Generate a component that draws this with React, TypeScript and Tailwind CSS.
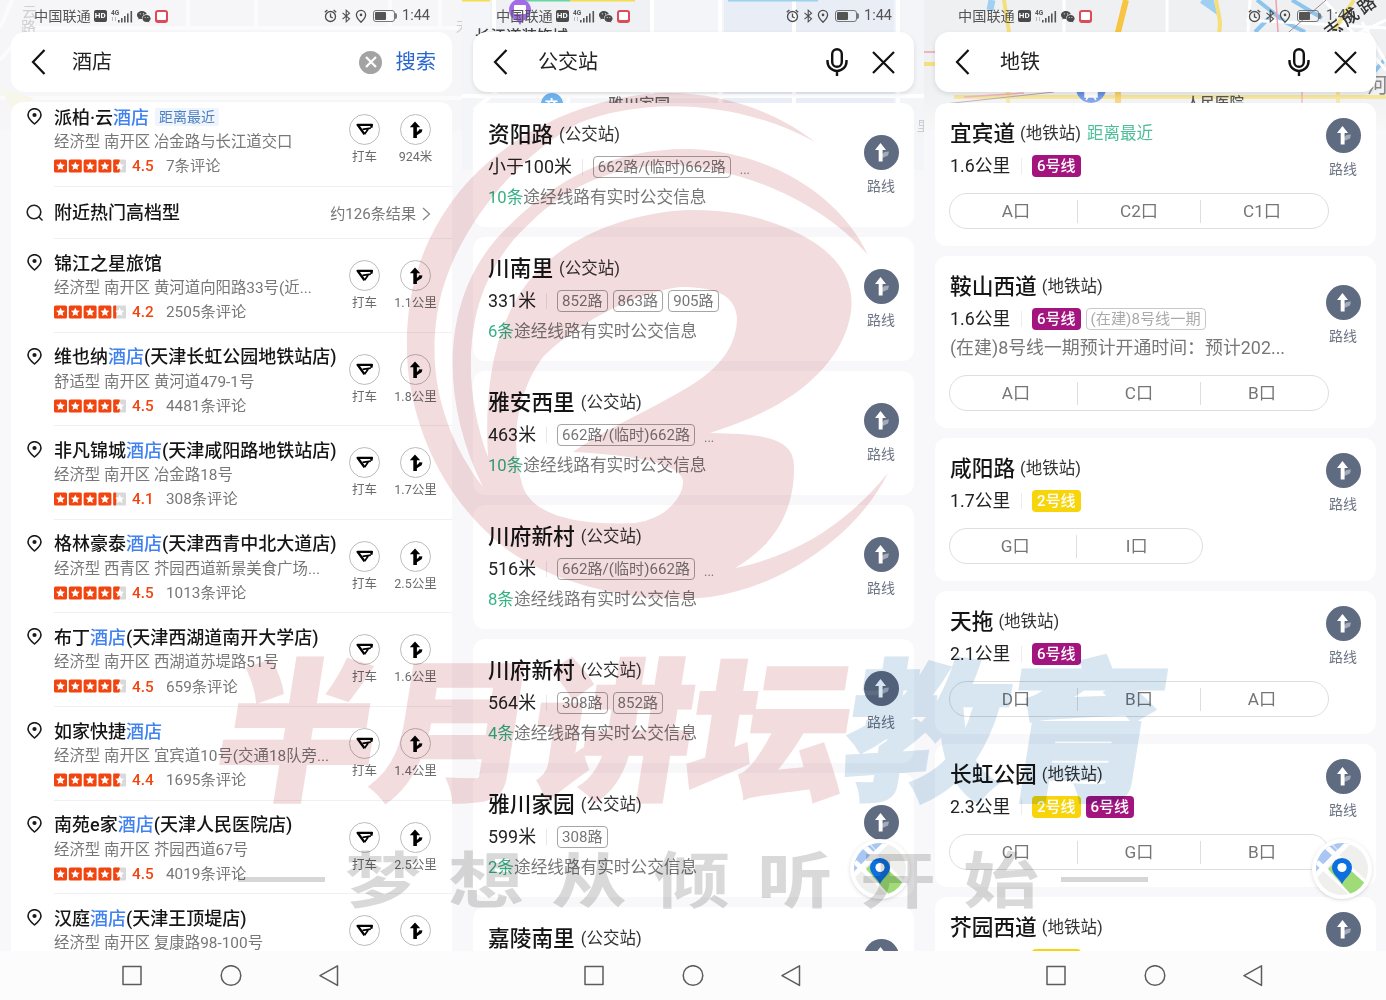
import React from "react";

type Hotel = {
  name: [string, string, string];
  address: string;
  score: number;
  reviews: string;
  distance: string;
  nearest?: boolean;
};

const hotels: Hotel[] = [
  { name: ["派柏·云", "酒店", ""], address: "经济型 南开区 冶金路与长江道交口", score: 4.5, reviews: "7条评论", distance: "924米", nearest: true },
  { name: ["锦江之星旅馆", "", ""], address: "经济型 南开区 黄河道向阳路33号(近...", score: 4.2, reviews: "2505条评论", distance: "1.1公里" },
  { name: ["维也纳", "酒店", "(天津长虹公园地铁站店)"], address: "舒适型 南开区 黄河道479-1号", score: 4.5, reviews: "4481条评论", distance: "1.8公里" },
  { name: ["非凡锦城", "酒店", "(天津咸阳路地铁站店)"], address: "经济型 南开区 冶金路18号", score: 4.1, reviews: "308条评论", distance: "1.7公里" },
  { name: ["格林豪泰", "酒店", "(天津西青中北大道店)"], address: "经济型 西青区 芥园西道新景美食广场...", score: 4.5, reviews: "1013条评论", distance: "2.5公里" },
  { name: ["布丁", "酒店", "(天津西湖道南开大学店)"], address: "经济型 南开区 西湖道苏堤路51号", score: 4.5, reviews: "659条评论", distance: "1.6公里" },
  { name: ["如家快捷", "酒店", ""], address: "经济型 南开区 宜宾道10号(交通18队旁...", score: 4.4, reviews: "1695条评论", distance: "1.4公里" },
  { name: ["南苑e家", "酒店", "(天津人民医院店)"], address: "经济型 南开区 芥园西道67号", score: 4.5, reviews: "4019条评论", distance: "2.5公里" },
  { name: ["汉庭", "酒店", "(天津王顶堤店)"], address: "经济型 南开区 复康路98-100号", score: 4.5, reviews: "", distance: "" },
];

const busStops = [
  { name: "资阳路", distance: "小于100米", lines: ["662路/(临时)662路"], more: true, count: "10条" },
  { name: "川南里", distance: "331米", lines: ["852路", "863路", "905路"], more: false, count: "6条" },
  { name: "雅安西里", distance: "463米", lines: ["662路/(临时)662路"], more: true, count: "10条" },
  { name: "川府新村", distance: "516米", lines: ["662路/(临时)662路"], more: true, count: "8条" },
  { name: "川府新村", distance: "564米", lines: ["308路", "852路"], more: false, count: "4条" },
  { name: "雅川家园", distance: "599米", lines: ["308路"], more: false, count: "2条" },
  { name: "嘉陵南里", distance: "", lines: [], more: false, count: "" },
];

const metroStops = [
  { name: "宜宾道", distance: "1.6公里", lines: ["6号线"], exits: ["A口", "C2口", "C1口"], nearest: true },
  {
    name: "鞍山西道",
    distance: "1.6公里",
    lines: ["6号线"],
    planned: "(在建)8号线一期",
    note: "(在建)8号线一期预计开通时间：预计202...",
    exits: ["A口", "C口", "B口"],
  },
  { name: "咸阳路", distance: "1.7公里", lines: ["2号线"], exits: ["G口", "I口"] },
  { name: "天拖", distance: "2.1公里", lines: ["6号线"], exits: ["D口", "B口", "A口"] },
  { name: "长虹公园", distance: "2.3公里", lines: ["2号线", "6号线"], exits: ["C口", "G口", "B口"] },
  { name: "芥园西道", distance: "", lines: ["2号线"], exits: [] },
];

const StatusBar = () => (
  <div className="relative flex h-8 shrink-0 items-center pl-[34px] pr-[33px] text-[#555]">
    <span className="text-[14.2px] leading-8">中国联通</span>
    <span className="ml-[3px] flex h-[12px] w-[13px] items-center justify-center rounded-[2px] bg-[#4a4a4a] text-[8px] font-bold leading-none text-white">
      HD
    </span>
    <svg className="ml-[4px] h-[16px] w-[22px]" viewBox="0 0 22 16" fill="#555">
      <text x="0" y="7" fontSize="6.5" fontWeight="700">4G</text>
      <path d="M1.5 9v4M4.500 9v4" stroke="#bbb" strokeWidth="1" />
      <path d="M7 12h1.600v2.500H7zM10 10h1.600v4.500H10zM13 8h1.600v6.500H13zM16 5.500h1.600v9H16zM19.500 3h1.600v11.500h-1.600z" />
    </svg>
    <svg className="ml-[4px] h-[13px] w-[14px]" viewBox="0 0 14 13" fill="#4a4a4a">
      <path d="M5 1C2.200 1 0 2.800 0 5c0 1.300.7 2.300 1.700 3L1.200 9.600 3 8.700c.6.200 1.300.3 2 .3C4.700 6.200 7 4.200 9.900 4.200 9.400 2.300 7.400 1 5 1z" />
      <path d="M9.500 5C7.100 5 5.400 6.600 5.400 8.500S7.100 12 9.500 12c.5 0 1-.1 1.500-.2l1.400.8-.4-1.400c1-.7 1.600-1.600 1.600-2.700C13.600 6.600 11.800 5 9.500 5z" />
      <g fill="#fff">
        <circle cx="3.300" cy="3.800" r=".6" />
        <circle cx="6.500" cy="3.800" r=".6" />
        <circle cx="8.200" cy="7.600" r=".5" />
        <circle cx="10.900" cy="7.600" r=".5" />
      </g>
    </svg>
    <span className="ml-[4px] flex h-[13px] w-[13px] items-center justify-center rounded-[3px] bg-[#dc4b59]">
      <span className="h-[8px] w-[9px] rounded-[1px] bg-white" />
    </span>
    <svg className="ml-auto h-[16px] w-[46px]" viewBox="0 0 46 16" fill="none" stroke="#4d4d4d" strokeWidth="1.300">
      <circle cx="6.500" cy="8.500" r="5" />
      <path d="M6.500 5.500v3.300l2.200 1M.8 4.300L3.400 2M12.200 4.300L9.600 2" />
      <path d="M18.500 4.800l7 6-3.300 3V2.200l3.300 3-7 6" strokeWidth="1.100" />
      <path d="M37 14.200c-3-3-4.600-4.900-4.600-7.300a4.600 4.600 0 019.200 0c0 2.400-1.600 4.300-4.600 7.300z" />
      <circle cx="37" cy="6.900" r="1.300" fill="#4d4d4d" stroke="none" />
    </svg>
    <span className="ml-[3px] flex h-[12px] w-[22px] items-center rounded-[3px] border border-[#777] p-[1px]">
      <span className="h-full w-[11px] rounded-[1px] bg-[#555]" />
    </span>
    <span className="h-[6px] w-[2px] rounded-r bg-[#777]" />
    <span className="ml-[5px] w-[27px] whitespace-nowrap text-[14.5px] leading-8">1:44</span>
  </div>
);

const BackIcon = () => (
  <svg className="h-[26px] w-[15px]" viewBox="0 0 15 26" fill="none" stroke="#111" strokeWidth="2.200">
    <path d="M13.500 1L2 13l11.500 12" />
  </svg>
);

const SearchHeader = ({ title, editing }: { title: string; editing?: boolean }) => (
  <div
    className={`relative ml-[11px] mr-[10px] flex h-[60px] shrink-0 items-center rounded-[14px] bg-white pl-[20px] ${
      editing ? "pr-4" : "pr-[19px] shadow-[0_2px_5px_rgba(0,0,0,0.10)]"
    }`}
  >
    <BackIcon />
    <span className={`text-[20px] text-[#222] ${editing ? "ml-[26px]" : "ml-[30px]"}`}>{title}</span>
    {editing ? (
      <>
        <span className="ml-auto flex h-[23px] w-[23px] items-center justify-center rounded-full bg-[#a3a3a3]">
          <svg className="h-3 w-3" viewBox="0 0 12 12" stroke="#fff" strokeWidth="2.200">
            <path d="M1 1l10 10M11 1L1 11" />
          </svg>
        </span>
        <span className="ml-[13px] text-[20.3px] text-[#2a66d0]">搜索</span>
      </>
    ) : (
      <>
        <svg className="ml-auto h-[28px] w-[22px]" viewBox="0 0 22 28" fill="none" stroke="#111" strokeWidth="2.400">
          <rect x="6.200" y="1.200" width="9.600" height="17.500" rx="4.800" />
          <path d="M1.500 12v1.500a9.500 9.500 0 0019 0V12M11 23v5" />
        </svg>
        <svg className="ml-[24px] h-[23px] w-[23px]" viewBox="0 0 23 23" stroke="#111" strokeWidth="2.200">
          <path d="M1 1l21 21M22 1L1 22" />
        </svg>
      </>
    )}
  </div>
);

const NavBar = () => (
  <div className="relative h-[49px] shrink-0 bg-[#fcfcfc] pl-[122px] pt-[14px]">
    <svg className="h-[22px] w-[218px]" viewBox="0 0 218 22" fill="none" stroke="#5c5c5c" strokeWidth="1.500" strokeLinejoin="round">
      <rect x="1" y="1.500" width="18" height="18" />
      <circle cx="109" cy="10.500" r="9.800" />
      <path d="M215.500.8v19.600L198 10.600z" />
    </svg>
  </div>
);

const PinIcon = () => (
  <svg className="h-[17px] w-[15px]" viewBox="0 0 15 17" fill="none" stroke="#1a1a1a" strokeWidth="1.600">
    <path d="M7.500 16C3.300 12.500 1 9.800 1 7a6.500 6.300 0 0113 0c0 2.800-2.300 5.500-6.500 9z" strokeLinejoin="round" />
    <circle cx="7.500" cy="7" r="2.100" fill="#1a1a1a" stroke="none" />
  </svg>
);

const TaxiIcon = () => (
  <svg className="h-[13px] w-[17px]" viewBox="0 0 17 13" fill="none" stroke="#000" strokeLinejoin="round">
    <path d="M15.200 4.800L15.900 1.800H1.600L8.500 11.200" strokeWidth="2.300" />
    <path d="M8.500 11.200L12.600 5.600M14.800 5.200L6.500 6.300" strokeWidth="1.700" />
  </svg>
);

const RouteIcon = () => (
  <svg className="h-[17px] w-[14px]" viewBox="0 0 14 17" fill="#000">
    <path d="M6 .5l5.200 5.800H7.900v4.600l2-1.700.3-1 3.300.3-.9 2.700-4.700 3V17H4.300V6.300H.8z" />
  </svg>
);

const Rating = ({ score }: { score: number }) => (
  <svg className="h-[14px] w-[72px] shrink-0" viewBox="0 0 72 14">
    {[0, 1, 2, 3, 4].map((i) => (
      <g key={i} transform={`translate(${i * 14.8} 0)`}>
        <rect y=".5" width="13" height="13" rx="1.500" fill={i < 4 ? "#f2440f" : "#d9d9d9"} />
        {i === 4 && <rect y=".5" width={score < 4.3 ? 3 : 6.500} height="13" rx="1" fill="#f2440f" />}
        <path
          d="M6.500 2.600l1.300 2.900 3.100.3-2.300 2.100.7 3.100-2.800-1.600L3.700 11l.7-3.100-2.300-2.100 3.100-.3z"
          fill="#fff"
        />
      </g>
    ))}
  </svg>
);

const RoundAction = ({ label, children }: { label: string; children: React.ReactNode }) => (
  <div className="flex w-[51px] flex-col items-center pt-[21px]">
    <span className="flex h-[31px] w-[31px] items-center justify-center rounded-full border border-[#bcbcbc]">{children}</span>
    <span className="mt-[4px] whitespace-nowrap text-[12.5px] leading-4 text-[#6b6b6b]">{label}</span>
  </div>
);

const HotelRow = ({ hotel }: { hotel: Hotel }) => (
  <div className="flex h-[93.6px]">
    <div className="w-[43px] shrink-0 pl-[16px] pt-[15px]">
      <PinIcon />
    </div>
    <div className="flex min-w-0 flex-1 border-b border-[#f0f0f0]">
      <div className="w-[285px] shrink-0 whitespace-nowrap pt-[11px]">
        <div className="flex h-[26px] items-center text-[18px] font-medium text-[#151515]">
          <span>
            {hotel.name[0]}
            <span className="text-[#3f82f0]">{hotel.name[1]}</span>
            {hotel.name[2]}
          </span>
          {hotel.nearest && (
            <span className="ml-[6px] rounded-[2px] bg-[#f0f5fd] px-1 text-[14px] font-normal leading-[18px] text-[#4a7fc0]">
              距离最近
            </span>
          )}
        </div>
        <div className="h-[23px] text-[15.4px] leading-[24px] text-[#777]">{hotel.address}</div>
        {hotel.reviews && (
          <div className="flex h-[26px] items-center text-[15.3px] text-[#777]">
            <Rating score={hotel.score} />
            <span className="ml-[6px] mt-px w-[34px] font-medium text-[#f2440f]">{hotel.score}</span>
            <span className="mt-px">{hotel.reviews}</span>
          </div>
        )}
      </div>
      <RoundAction label={hotel.distance && "打车"}>
        <TaxiIcon />
      </RoundAction>
      <RoundAction label={hotel.distance}>
        <RouteIcon />
      </RoundAction>
    </div>
  </div>
);

const RouteButton = () => (
  <div className="flex w-[36px] flex-col items-center">
    <span className="flex h-[35px] w-[35px] items-center justify-center rounded-full bg-[#5f6b80]">
      <svg className="h-[19px] w-[18px]" viewBox="0 0 18 19">
        <path d="M9.500 11.500l3-2.500 4.500-.6-1 4-5.500 2.600z" fill="#a3abb8" />
        <path d="M8.500 0l5.500 7h-3.400v11.500H6.700V7H3z" fill="#fff" />
      </svg>
    </span>
    <span className="mt-[6px] text-[14px] leading-5 text-[#6d7585]">路线</span>
  </div>
);

const BusCard = ({ stop }: { stop: (typeof busStops)[number] }) => (
  <div className="flex h-[124px] shrink-0 justify-between rounded-xl bg-white pl-[15px] pr-[15px]">
    <div className="whitespace-nowrap pt-[17px]">
      <div className="flex h-[30px] items-center">
        <span className="text-[21.700px] font-medium text-[#151515]">{stop.name}</span>
        <span className="ml-[6px] text-[16.5px] text-[#333]">(公交站)</span>
      </div>
      {stop.distance && (
        <>
          <div className="mt-[5px] flex h-[24px] items-center">
            <span className="text-[17.9px] text-[#222]">{stop.distance}</span>
            <span className="ml-[10px] mr-[10px] h-4 w-px bg-[#e8e8ec]" />
            <span className="flex gap-[5px]">
              {stop.lines.map((line) => (
                <span key={line} className="h-[22px] rounded-[4px] border border-[#a5a5a5] px-[4px] text-[15.1px] leading-5 text-[#777]">
                  {line}
                </span>
              ))}
            </span>
            {stop.more && <span className="ml-[9px] mt-[6px] text-[13px] text-[#888]">...</span>}
          </div>
          <div className="mt-[7px] text-[16.650px] leading-6 text-[#777]">
            <span className="text-[#35b184]">{stop.count}</span>途经线路有实时公交信息
          </div>
        </>
      )}
    </div>
    <div className="pt-[32px]">
      <RouteButton />
    </div>
  </div>
);

const MetroCard = ({ stop }: { stop: (typeof metroStops)[number] }) => (
  <div
    className={`flex shrink-0 justify-between rounded-xl bg-white pl-[14px] pr-[15px] ${stop.note ? "h-[171.7px]" : "h-[143.2px]"}`}
  >
    <div className="whitespace-nowrap pt-[16px]">
      <div className="flex h-[30px] items-center pl-px">
        <span className="text-[21.700px] font-medium text-[#151515]">{stop.name}</span>
        <span className="ml-[5px] text-[16.5px] text-[#333]">(地铁站)</span>
        {stop.nearest && <span className="ml-[6px] text-[16.5px] text-[#4cbf98]">距离最近</span>}
      </div>
      <div className="mt-[5px] flex h-[24px] items-center pl-px">
        <span className="w-[71px] text-[17.8px] text-[#222]">{stop.distance}</span>
        <span className="mr-[10px] h-4 w-px bg-[#ececf0]" />
        <span className="flex gap-[5px]">
          {stop.lines.map((line) => (
            <span
              key={line}
              className={`h-[22px] rounded-[4px] px-[5px] text-[15px] font-medium leading-[22px] text-white ${
                line === "2号线" ? "bg-[#f8d40b]" : "bg-[#a3147f]"
              }`}
            >
              {line}
            </span>
          ))}
          {stop.planned && (
            <span className="h-[22px] rounded-[4px] border border-[#c9c9c9] px-[4px] text-[15.2px] leading-5 text-[#aaa]">
              {stop.planned}
            </span>
          )}
        </span>
      </div>
      {stop.note && <div className="mt-[5px] h-6 pl-px text-[17.9px] leading-6 text-[#777]">{stop.note}</div>}
      {stop.exits.length > 0 && (
        <div
          className={`flex h-[36px] items-center rounded-full border border-[#dedede] px-[5px] pt-px ${
            stop.note ? "mt-[15px]" : "mt-[15px]"
          } ${stop.exits.length === 3 ? "w-[380px]" : "w-[254px]"}`}
        >
          {stop.exits.map((exit, i) => (
            <span
              key={exit}
              className={`flex-1 text-center text-[17.2px] leading-[23px] text-[#757575] ${i > 0 ? "border-l border-[#dedede]" : ""}`}
            >
              {exit}
            </span>
          ))}
        </div>
      )}
    </div>
    <div className={`-ml-10 ${stop.note ? "pt-[29px]" : "pt-[15px]"}`}>
      <RouteButton />
    </div>
  </div>
);

const MapButton = () => (
  <svg className="absolute bottom-[100px] right-[13px] h-[62px] w-[62px] drop-shadow" viewBox="0 0 62 62">
    <defs>
      <clipPath id="disc">
        <circle cx="31" cy="31" r="26" />
      </clipPath>
    </defs>
    <circle cx="31" cy="31" r="30" fill="#fff" />
    <g clipPath="url(#disc)">
      <rect width="62" height="62" fill="#efefee" />
      <path d="M0 40L26 12 14 0H0z" fill="#a9c6f5" />
      <path d="M18 2h24L30 15z" fill="#a9c6f5" />
      <path d="M8 2l54 50M-2 44L42 0" stroke="#fff" strokeWidth="5" />
      <path d="M6 24l42 38" stroke="#fff" strokeWidth="5" />
      <path d="M17 31l10-10 30 27-14 12z" fill="#9fdc77" />
    </g>
    <path d="M31 46c-3-6-10-10-10-16.500a10 9.500 0 0120 0C41 36 34 40 31 46z" fill="#0d6fe0" />
    <circle cx="31" cy="29.500" r="4.600" fill="#fff" />
  </svg>
);

// Map strip that shows through behind the status bar and the search box
const HotelMap = () => (
  <svg className="absolute left-0 top-0 h-[130px] w-full" viewBox="0 0 462 130">
    <rect width="462" height="130" fill="#f6f6f8" />
    <path d="M0 28l12-28M0 60l28-32h430M188 0v28M256 0v28M390 0v28M440 0v28M0 98h462" stroke="#fbfbfb" strokeWidth="4" fill="none" />
    <path d="M0 88l34 10-20 14z" fill="#f6f6ea" />
    <text x="22" y="17" fontSize="15" fill="#d0d0d0">云</text>
    <text x="21" y="32" fontSize="15" fill="#d0d0d0">路</text>
    <text x="456" y="31" fontSize="13" fill="#ccc">天</text>
  </svg>
);

const BusMap = () => (
  <svg className="absolute left-0 top-0 h-[170px] w-full" viewBox="0 0 462 170">
    <rect width="462" height="170" fill="#f4f5f9" />
    <rect x="28" width="160" height="32" fill="#eff1f5" />
    <rect x="262" width="170" height="110" fill="#e9edf5" />
    <path d="M32 0v30M190 0v110M258 0v110M332 0v110M436 0v110M0 96h462M12 110l24-20M106 96v14" stroke="#fff" strokeWidth="4" fill="none" />
    <path d="M60 0h48v1.500H60z" fill="#67d7a4" />
    <path d="M0 0h28v1.500H0zM108 0h65v1.500h-65z" fill="#f5dd4c" />
    <path d="M266 0h90v1.500h-90z" fill="#9bd3ee" />
    <path d="M58 25l-5-8h10z" fill="#a36be8" />
    <circle cx="58" cy="10" r="11" fill="#a36be8" />
    <rect x="52" y="5" width="12" height="9" rx="1" fill="#fff" />
    <circle cx="90" cy="104" r="11" fill="#6eb3ee" />
    <text x="83" y="109" fontSize="13" fontWeight="700" fill="#fff">文</text>
    <text x="13" y="42" fontSize="15.500" fontWeight="500" fill="#444">长江道装饰城</text>
    <text x="146" y="110" fontSize="15.500" fontWeight="500" fill="#666">雅川家园</text>
    <text x="455" y="130" fontSize="13" fill="#ccc">里</text>
  </svg>
);

const MetroMap = () => (
  <svg className="absolute left-0 top-0 h-[130px] w-full" viewBox="0 0 462 130">
    <defs>
      <linearGradient id="fade" x1="0" y1="0" x2="0" y2="1">
        <stop offset="0.650" stopColor="#f7f7f8" stopOpacity="0" />
        <stop offset="1" stopColor="#f7f7f8" />
      </linearGradient>
    </defs>
    <rect width="462" height="130" fill="#eff0f2" />
    <g fill="none">
      <path d="M68 0l-2 10M278 0l10 7-2-7" stroke="#9fd0f2" strokeWidth="7" />
      <path d="M333 0l28 22 20 10M345 18l-14 14M368 0l30 18M440 84l22-26" stroke="#8ec5ef" strokeWidth="4" />
      <path d="M243 0v32M140 0v32M324 32l2-32M322 20l140 8M400 0l62 70M420 40l42-20M438 22l24 40" stroke="#fff" strokeWidth="3" />
      <path d="M0 64h30M80 0l5 32M292 0c2 14 6 22 3 32M30 97h432M84 90v18M410 30l20-30M414 92v18" stroke="#f4df7c" strokeWidth="4" />
      <path d="M202 0l-8 32v78" stroke="#f7c542" strokeWidth="6" />
      <path d="M352 0l2 32M0 52h30M378 90v20M40 97l60-4" stroke="#ef9fae" strokeWidth="1.500" />
      <path d="M402 0l-44 38M20 104l110-12" stroke="#a08a98" strokeWidth="1" />
    </g>
    <circle cx="167" cy="88" r="15" fill="#4479de" />
    <path d="M161 90h12v7h-12zM162 100l2-3M172 100l-2-3" fill="#fff" stroke="#fff" strokeWidth="1.500" />
    <rect width="462" height="130" fill="url(#fade)" />
    <text x="262" y="108" fontSize="14.500" fontWeight="500" fill="#555">人民医院</text>
    <text x="443" y="92" fontSize="21" fill="#888">河</text>
  </svg>
);

const Swoosh = () => (
  <path
    fill="#f3dcde"
    fillRule="evenodd"
    d="M815 142C762 100 682 82 612 100C550 114 490 150 453 200C420 245 402 300 408 370C416 440 450 505 505 548C555 585 640 605 710 597C790 585 860 530 888 473C850 520 800 555 735 568C775 545 795 510 794 465C793 436 758 434 710 433C755 418 806 398 837 350C860 310 858 272 815 243C775 217 720 205 665 212C610 220 560 242 528 282C495 325 484 385 488 457C472 415 466 365 475 320C482 285 500 250 530 223C570 183 620 165 669 165C740 167 820 200 868 255C840 195 770 152 690 149C610 148 550 182 500 235C440 300 440 400 483 487C447 440 427 380 437 315C448 240 510 160 579 123C640 98 735 98 815 142ZM573 452C600 432 650 410 690 386C720 368 737 345 737 318C735 292 710 287 680 287C630 294 575 325 543 357C515 395 510 445 523 487C535 520 590 525 635 523C665 519 684 498 683 480C678 462 630 455 573 452Z"
  />
);

const Watermark = () => (
  <svg className="pointer-events-none absolute inset-0 h-[1000px] w-[1386px] mix-blend-multiply" viewBox="0 0 1386 1000">
    <Swoosh />
    <g
      transform="translate(0 788) skewX(-9) scale(1 0.950)"
      fontSize="160"
      fontWeight="900"
      fontFamily="'Noto Sans CJK SC', sans-serif"
      strokeWidth="3"
    >
      {["半", "月", "讲", "坛", "教", "育"].map((char, i) => (
        <text
          key={char}
          x={210 + i * 157.200}
          y="0"
          fill={i < 4 ? "#f3dcde" : "#d7e6f1"}
          stroke={i < 4 ? "#f3dcde" : "#d7e6f1"}
        >
          {char}
        </text>
      ))}
    </g>
    <g transform="translate(0 903) scale(1 0.800)" fontSize="76" fontWeight="700" fill="#d9d9d9" fontFamily="'Noto Sans CJK SC', sans-serif">
      {["梦", "想", "从", "倾", "听", "开", "始"].map((char, i) => (
        <text key={char} x={345 + i * 103} y="0">
          {char}
        </text>
      ))}
    </g>
    <path d="M238 877h87v5h-87zM1061 877h87v5h-87z" fill="#d6d6d6" />
  </svg>
);

const Phone = ({ map, children }: { map: React.ReactNode; children: React.ReactNode }) => (
  <div className="relative flex h-[1000px] w-[462px] flex-col overflow-hidden bg-[#f8f8fa]">
    {map}
    <StatusBar />
    {children}
    <NavBar />
  </div>
);

export default function App() {
  return (
    <div className="relative flex h-[1000px] w-[1386px] overflow-hidden bg-white font-[Roboto,'Noto_Sans_CJK_SC',sans-serif]">
      <Phone map={<HotelMap />}>
        <SearchHeader title="酒店" editing />
        <div className="relative ml-[11px] mr-[10px] mt-[10px] min-h-0 flex-1 overflow-hidden rounded-t-xl bg-white">
          <div className="-mt-[9px]">
            <HotelRow hotel={hotels[0]} />
            <div className="flex h-[52.500px]">
              <div className="w-[43px] shrink-0 pl-[15px] pt-[17px]">
                <svg className="h-[18px] w-[18px]" viewBox="0 0 18 18" fill="none" stroke="#222" strokeWidth="1.600">
                  <circle cx="8" cy="8" r="6.800" />
                  <path d="M12.800 12.800l3.700 3.700" />
                </svg>
              </div>
              <div className="flex flex-1 items-center border-b border-[#f0f0f0] pr-[21px] pt-px">
                <span className="text-[18px] font-medium text-[#151515]">附近热门高档型</span>
                <span className="ml-auto mt-[3px] text-[15.1px] text-[#777]">约126条结果</span>
                <svg className="ml-[6px] mt-[3px] h-[14px] w-[9px]" viewBox="0 0 9 14" fill="none" stroke="#888" strokeWidth="1.300">
                  <path d="M1 1l6.500 6L1 13" />
                </svg>
              </div>
            </div>
            {hotels.slice(1).map((hotel) => (
              <HotelRow key={hotel.address} hotel={hotel} />
            ))}
          </div>
        </div>
      </Phone>

      <Phone map={<BusMap />}>
        <SearchHeader title="公交站" />
        <div className="relative ml-[11px] mr-[10px] mt-[11px] flex min-h-0 flex-1 flex-col gap-[10px] overflow-hidden">
          {busStops.map((stop, i) => (
            <BusCard key={i} stop={stop} />
          ))}
        </div>
        <MapButton />
      </Phone>

      <Phone map={<MetroMap />}>
        <SearchHeader title="地铁" />
        <div className="relative ml-[11px] mr-[10px] mt-[11px] flex min-h-0 flex-1 flex-col gap-[10px] overflow-hidden">
          {metroStops.map((stop) => (
            <MetroCard key={stop.name} stop={stop} />
          ))}
        </div>
        <MapButton />
        <svg className="absolute right-0 top-0 h-8 w-[80px]" viewBox="0 0 80 32">
          <text transform="translate(24 39) rotate(-36)" fontSize="17.500" fontWeight="500" letterSpacing="3" fill="#333">
            志成路
          </text>
        </svg>
      </Phone>

      <Watermark />
    </div>
  );
}
